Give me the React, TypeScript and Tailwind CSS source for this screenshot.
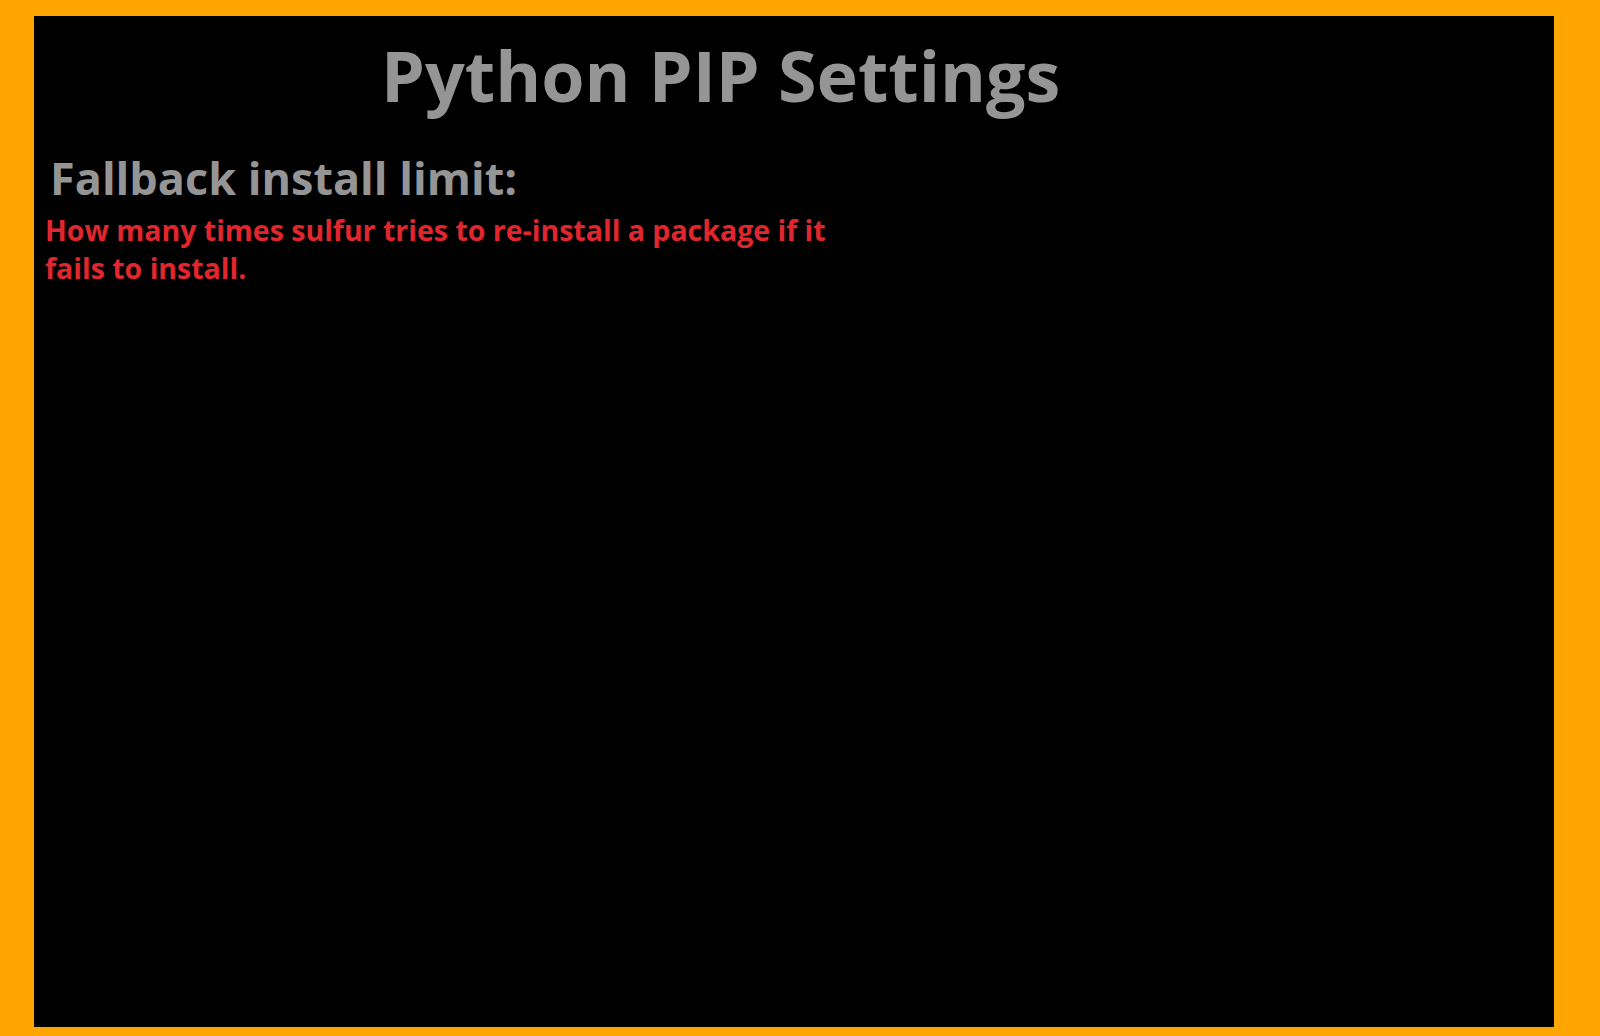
export default function App() {
  return (
    <div className="h-[1036px] w-[1600px] bg-[#ffa500] pt-4 pl-[34px] pr-[46px] pb-[9px]" style={{ fontFamily: "'Open Sans', 'Noto Sans', sans-serif" }}>
      <div className="h-full w-full bg-black">
        <h1 className="pl-[347px] pt-[24px] text-[70px] font-bold leading-none text-[#959595]">
          Python PIP Settings
        </h1>
        <h2 className="mt-[45px] pl-[16px] text-[45px] font-bold leading-none text-[#959595]">
          Fallback install limit:
        </h2>
        <p className="mt-[11px] max-w-[830px] pl-[11px] text-[28.5px] font-bold leading-[38px] text-[#e1262d]">
          How many times sulfur tries to re-install a package if it fails to install.
        </p>
      </div>
    </div>
  );
}
